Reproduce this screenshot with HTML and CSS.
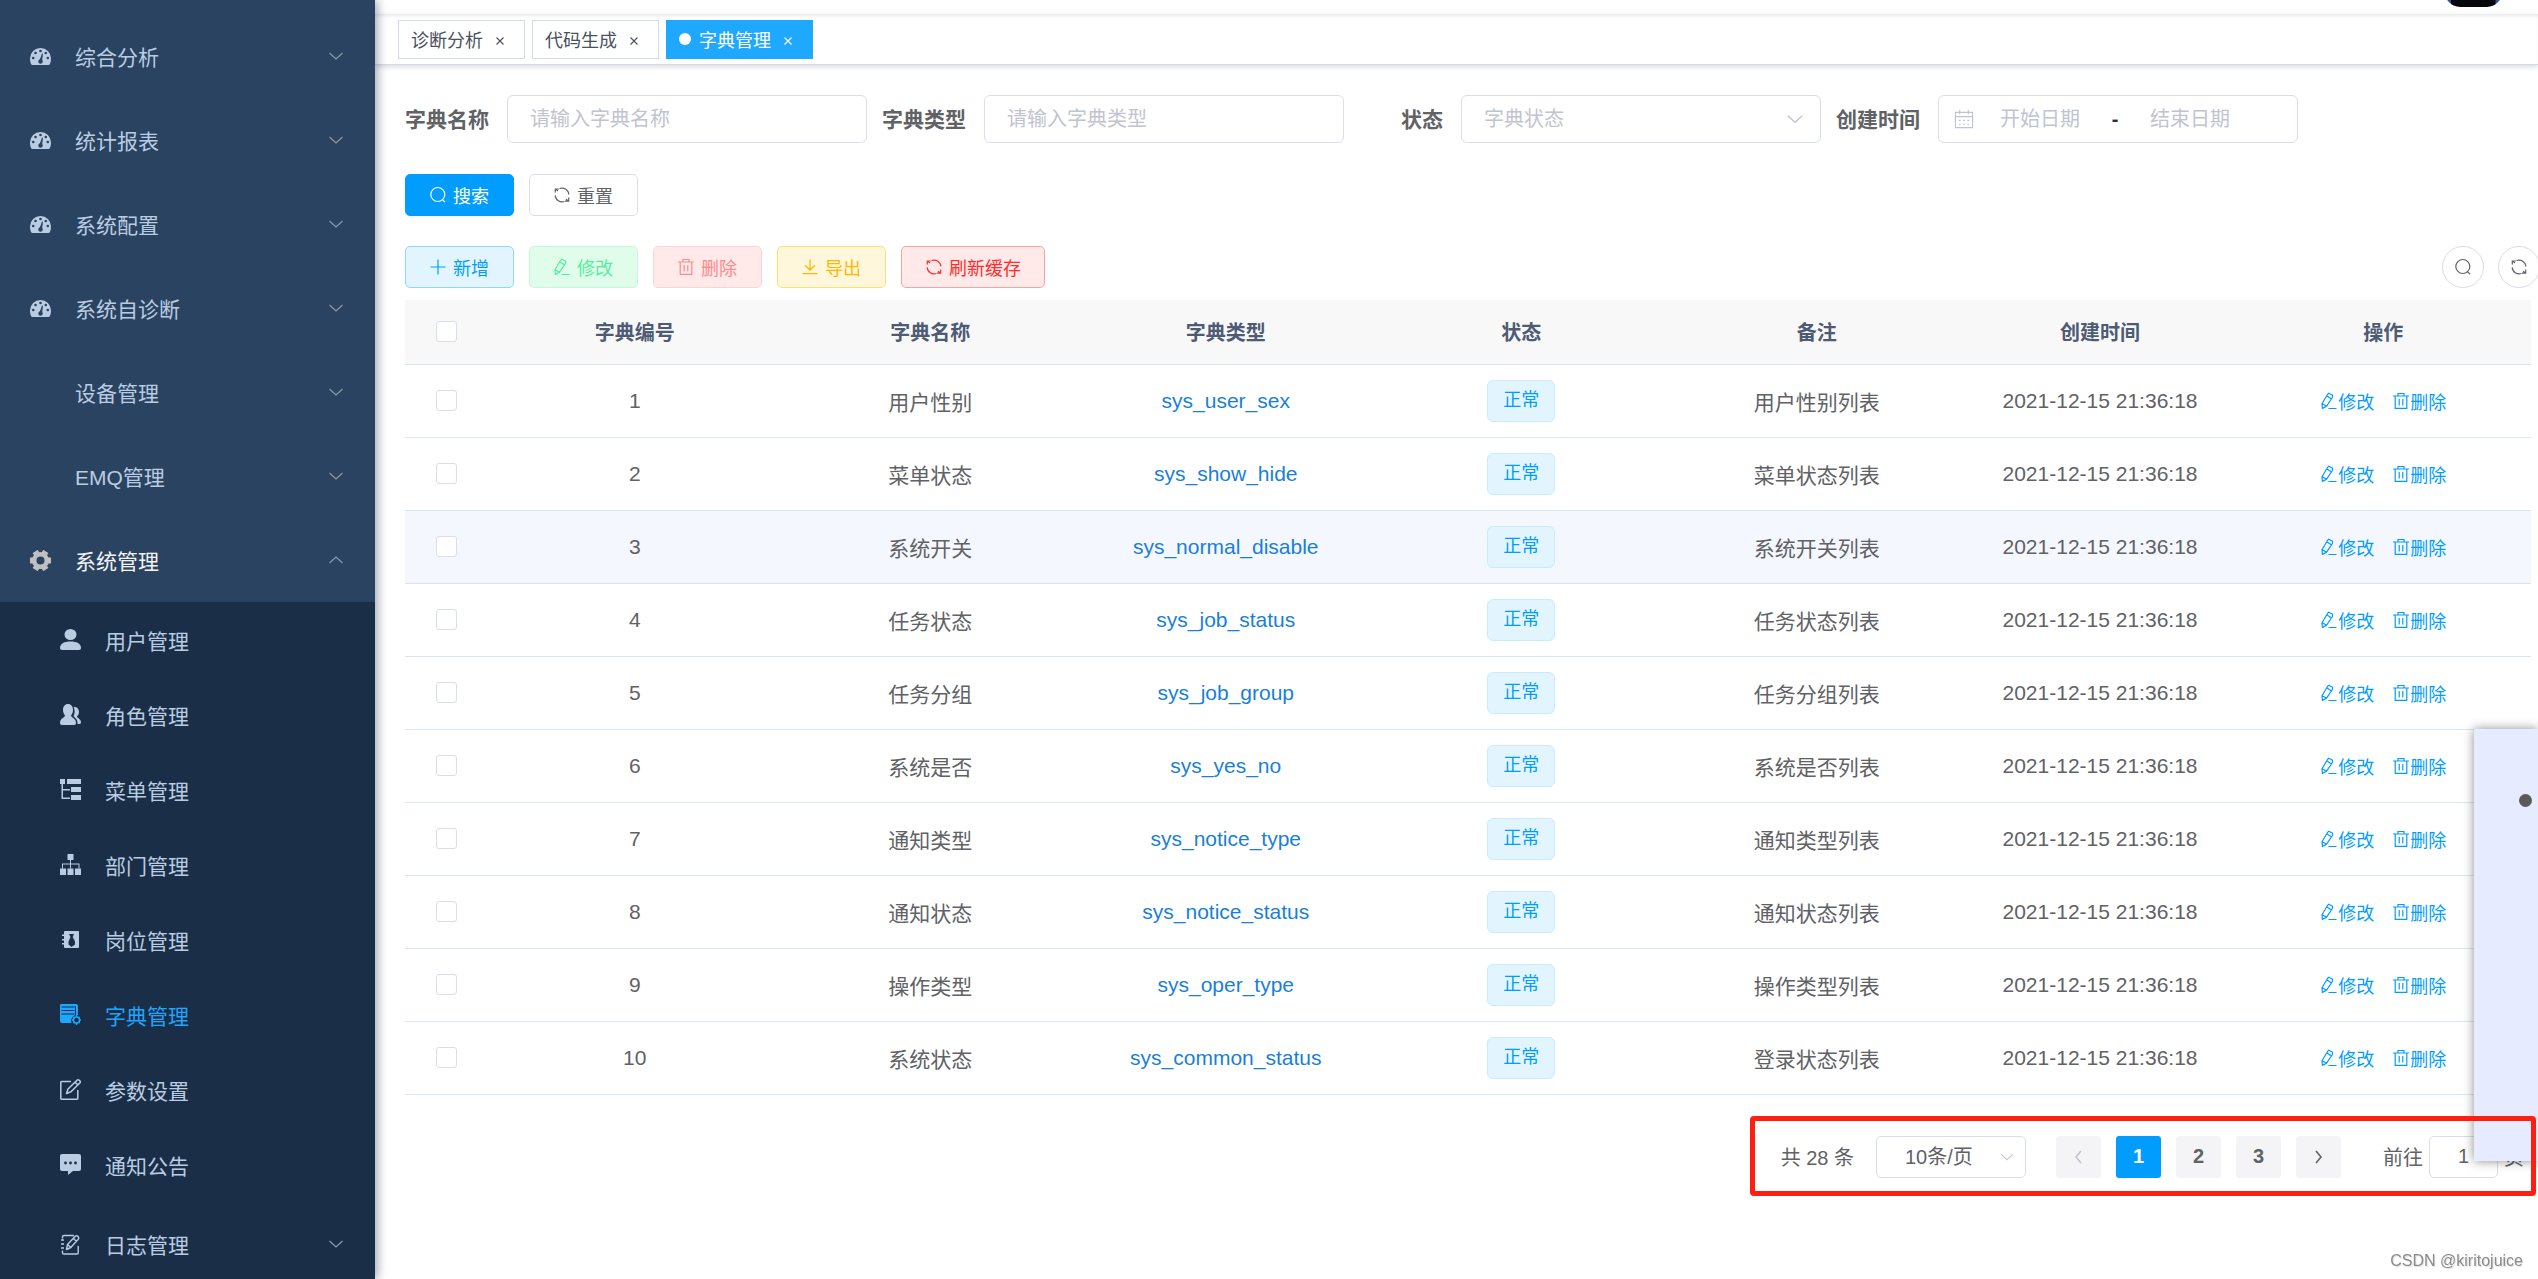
FILE: index.html
```html
<!DOCTYPE html>
<html lang="zh-CN">
<head>
<meta charset="utf-8">
<title>字典管理</title>
<link rel="stylesheet" href="styles.css">
</head>
<body>
<svg class="sprite" aria-hidden="true">
  <symbol id="i-dash" viewBox="0 0 21 21"><path fill="currentColor" d="M10.500 2A10.500 10.500 0 0 0 0 12.500C0 15 .5 16.800 1.200 18.200Q1.600 19 2.500 19H18.500Q19.400 19 19.800 18.200C20.500 16.800 21 15 21 12.500A10.500 10.500 0 0 0 10.500 2Z"/><g fill="var(--hole)"><circle cx="10.500" cy="5" r="1.300"/><circle cx="5.500" cy="7" r="1.300"/><circle cx="15.800" cy="7" r="1.300"/><circle cx="3.200" cy="12" r="1.300"/><circle cx="17.800" cy="12" r="1.300"/><circle cx="10.500" cy="15.500" r="2.200"/><path d="M9.500 14.500L12 7.500L13 7.800L12 15.500Z"/></g></symbol>
  <symbol id="i-gear" viewBox="0 0 21 21"><circle cx="10.500" cy="10.500" r="6.300" fill="none" stroke="currentColor" stroke-width="4.600"/><path stroke="currentColor" stroke-width="6" d="M0 10.500H4M17 10.500h4M5.200 1.400l2.400 4.100M13.400 15.500l2.400 4.100M15.800 1.400l-2.400 4.100M7.600 15.500l-2.400 4.100"/></symbol>
  <symbol id="i-user" viewBox="0 0 21 21"><g fill="currentColor"><ellipse cx="10.500" cy="5.500" rx="6" ry="5.500"/><path d="M0 19C0 14.500 4.500 12.500 10.500 12.500S21 14.500 21 19Q21 21 18 21H3Q0 21 0 19Z"/></g></symbol>
  <symbol id="i-peoples" viewBox="0 0 21 21"><g fill="currentColor"><path d="M8 0C11 0 13 2.500 13 6C13 8.500 12 10.500 11 11.500C11 13.500 16 14 16 19Q16 21 14 21H2Q0 21 0 19C0 14 5 13.500 5 11.500C4 10.500 3 8.500 3 6C3 2.500 5 0 8 0Z"/><path d="M13.500 3C16.500 2.500 19 4.500 19 8C19 10 18 11.500 17 12.200C17 14 21 15 21 18.500Q21 20 19 20H17.500C18 16 15.500 14 13.500 12.200C15 9.500 15 5.500 13.500 3Z"/></g></symbol>
  <symbol id="i-tree" viewBox="0 0 21 21"><g fill="currentColor"><path d="M0 0h5v5H0zM7 0h14v5H7zM11 8h10v5H11zM11 16h10v5H11z"/><path d="M1.500 5h1.500v5h7v1.500H3v7h7V20H1.500z"/></g></symbol>
  <symbol id="i-org" viewBox="0 0 21 21"><g fill="currentColor"><path d="M7.500 0h6v6h-6zM0 14.500h6V21H0zM7.500 14.500h6V21h-6zM15 14.500h6V21h-6z"/><path d="M10 6h1v3.500h8.500v5h-1v-4H11v4h-1v-4H3v4H2v-5h8z"/></g></symbol>
  <symbol id="i-post" viewBox="0 0 21 21"><path fill="currentColor" d="M5 2h13q1 0 1 1v15q0 1-1 1H5q-1 0-1-1v-2.500H2V14h2v-2.500H2V10h2V7H2V5.500h2V3q0-1 1-1z"/><path fill="var(--hole)" d="M9 5h5l-1.300 3L15 12.500v3L11.500 18 8.500 15.500v-3L10.500 8z"/></symbol>
  <symbol id="i-dict" viewBox="0 0 21 21"><path fill="currentColor" d="M1 0H16q2 0 2 2V11a6 6 0 0 0-6.500 8H2q-2 0-2-2V1q0-1 1-1z"/><path fill="none" stroke="var(--hole)" d="M1.500 3H14.500M1.500 6.500h13M1.500 10h13M15.500 2v9"/><circle cx="16.500" cy="16" r="3" fill="none" stroke="currentColor" stroke-width="1.500"/><path stroke="currentColor" stroke-width="1.500" d="M16.500 11v2M16.500 19v2M12 16h1.500M19.500 16H21M13.500 12.800l1 1.200M19.500 12.800l-1 1.200M13.500 19.200l1-1.200M19.500 19.200l-1-1.200"/></symbol>
  <symbol id="i-edit" viewBox="0 0 21 21"><path fill="none" stroke="currentColor" stroke-width="1.500" stroke-linejoin="round" d="M11 2.500H1.500Q.8 2.500.8 3.200V19.500Q.8 20.200 1.500 20.200H17Q17.800 20.200 17.800 19.500V11M6.500 14.500L8 10 17 1.200Q18 .5 19 1.200L20 2Q20.600 3 19.800 4L11 12.800ZM15 3l3 3"/></symbol>
  <symbol id="i-msg" viewBox="0 0 21 21"><path fill="currentColor" d="M2 0H19q2 0 2 2V15q0 2-2 2H13L8 21V17H2q-2 0-2-2V2q0-2 2-2z"/><g fill="var(--hole)"><circle cx="5.500" cy="9" r="1.400"/><circle cx="10.500" cy="9" r="1.400"/><circle cx="15.500" cy="9" r="1.400"/></g></symbol>
  <symbol id="i-log" viewBox="0 0 21 21"><path fill="none" stroke="currentColor" stroke-width="1.400" stroke-linejoin="round" d="M14 1.500H4Q2.500 1.500 2.500 3V4.500M1 6h3M1 10h3M1 14h3M2.500 16.500V19Q2.500 20 4 20H17Q18.200 20 18.200 19V12M6.500 15.500L7.500 10.500 15 2.500Q16.500 1 18 2.500T18 5.500L10.800 13.500ZM13.500 4.500l3 3M7.800 10.700l3 2.700"/></symbol>
  <symbol id="i-down" viewBox="0 0 18 18"><path fill="none" stroke="currentColor" stroke-width="1.200" d="M2.500 6L9 12L15.500 6"/></symbol>
  <symbol id="i-up" viewBox="0 0 18 18"><path fill="none" stroke="currentColor" stroke-width="1.200" d="M2.500 12L9 6L15.500 12"/></symbol>
  <symbol id="i-left" viewBox="0 0 18 18"><path fill="none" stroke="currentColor" stroke-width="1.600" d="M11 3L6 9L11 15"/></symbol>
  <symbol id="i-right" viewBox="0 0 18 18"><path fill="none" stroke="currentColor" stroke-width="1.600" d="M6 3L11 9L6 15"/></symbol>
  <symbol id="i-x" viewBox="0 0 10 10"><path fill="none" stroke="currentColor" stroke-width="1.100" d="M1.500 1.500L8.500 8.500M8.500 1.500L1.500 8.500"/></symbol>
  <symbol id="i-search" viewBox="0 0 18 18"><path fill="none" stroke="currentColor" stroke-width="1.200" d="M13.300 13.500L16 16.200"/><circle cx="8.800" cy="8.500" r="7" fill="none" stroke="currentColor" stroke-width="1.200"/></symbol>
  <symbol id="i-refresh" viewBox="0 0 18 18"><path fill="none" stroke="currentColor" stroke-width="1.200" d="M6.500 2.500C11 1 15.700 4 15.800 8.600M2.200 9.400C2.400 14 7 17 11.500 15.500M2.300 6.500V3H5.800M3 3.400L5 5M15.700 11.500V15.200H12M15 14.800L13 13.200"/></symbol>
  <symbol id="i-plus" viewBox="0 0 18 18"><path stroke="currentColor" stroke-width="1.200" d="M9 1.500V16.500M1.500 9H16.500"/></symbol>
  <symbol id="i-pen" viewBox="0 0 18 18"><path fill="none" stroke="currentColor" stroke-width="1.200" stroke-linejoin="round" d="M7.500 2.500L8.800 1.200L12.600 3.300L12.400 5.500L6.600 14.200L2.400 16.400L2 11.800ZM7 4L11.200 6.800M2.200 11.800L6.600 14.200M8.500 16.500H16.500"/></symbol>
  <symbol id="i-trash" viewBox="0 0 18 18"><path fill="none" stroke="currentColor" stroke-width="1.200" d="M1 4H17M3.200 4V16.400H14.800V4M6 4V1.500H12V4M7.200 7V13.500M10.800 7V13.500"/></symbol>
  <symbol id="i-download" viewBox="0 0 18 18"><path fill="none" stroke="currentColor" stroke-width="1.300" d="M9 1.500V12M4 7.200L9 12L14 7.200M1.500 15.700H16.500"/></symbol>
  <symbol id="i-cal" viewBox="0 0 21 21"><path fill="none" stroke="currentColor" stroke-width="1.200" d="M1.500 3.500H19.500V19.500H1.500ZM1.500 8H19.500M6 1V5.500M15 1V5.500M5 12h2M9.500 12h2M14 12h2M5 16h2M9.500 16h2M14 16h2"/></symbol>
</svg>

<div class="app">
  <nav class="sidebar">
    <ul class="menu">
      <li><a href="#" class="item"><svg class="ico"><use href="#i-dash"/></svg><span class="name">综合分析</span><svg class="arrow"><use href="#i-down"/></svg></a></li>
      <li><a href="#" class="item"><svg class="ico"><use href="#i-dash"/></svg><span class="name">统计报表</span><svg class="arrow"><use href="#i-down"/></svg></a></li>
      <li><a href="#" class="item"><svg class="ico"><use href="#i-dash"/></svg><span class="name">系统配置</span><svg class="arrow"><use href="#i-down"/></svg></a></li>
      <li><a href="#" class="item"><svg class="ico"><use href="#i-dash"/></svg><span class="name">系统自诊断</span><svg class="arrow"><use href="#i-down"/></svg></a></li>
      <li><a href="#" class="item"><span class="ico"></span><span class="name">设备管理</span><svg class="arrow"><use href="#i-down"/></svg></a></li>
      <li><a href="#" class="item"><span class="ico"></span><span class="name">EMQ管理</span><svg class="arrow"><use href="#i-down"/></svg></a></li>
      <li>
        <a href="#" class="item open"><svg class="ico"><use href="#i-gear"/></svg><span class="name">系统管理</span><svg class="arrow"><use href="#i-up"/></svg></a>
        <ul class="submenu">
          <li><a href="#" class="item"><svg class="ico"><use href="#i-user"/></svg><span class="name">用户管理</span></a></li>
          <li><a href="#" class="item"><svg class="ico"><use href="#i-peoples"/></svg><span class="name">角色管理</span></a></li>
          <li><a href="#" class="item"><svg class="ico"><use href="#i-tree"/></svg><span class="name">菜单管理</span></a></li>
          <li><a href="#" class="item"><svg class="ico"><use href="#i-org"/></svg><span class="name">部门管理</span></a></li>
          <li><a href="#" class="item"><svg class="ico"><use href="#i-post"/></svg><span class="name">岗位管理</span></a></li>
          <li><a href="#" class="item active"><svg class="ico"><use href="#i-dict"/></svg><span class="name">字典管理</span></a></li>
          <li><a href="#" class="item"><svg class="ico"><use href="#i-edit"/></svg><span class="name">参数设置</span></a></li>
          <li><a href="#" class="item"><svg class="ico"><use href="#i-msg"/></svg><span class="name">通知公告</span></a></li>
          <li><a href="#" class="item parent"><svg class="ico"><use href="#i-log"/></svg><span class="name">日志管理</span><svg class="arrow"><use href="#i-down"/></svg></a></li>
        </ul>
      </li>
    </ul>
  </nav>

  <div class="main">
    <header class="navbar"><div class="avatar"></div></header>
    <div class="tags">
      <a href="#" class="tag">诊断分析<svg class="close"><use href="#i-x"/></svg></a>
      <a href="#" class="tag">代码生成<svg class="close"><use href="#i-x"/></svg></a>
      <a href="#" class="tag current"><i class="dot"></i>字典管理<svg class="close"><use href="#i-x"/></svg></a>
    </div>

    <main class="content">
      <form class="filters">
        <div class="field"><label for="f-name">字典名称</label><input id="f-name" class="box" type="text" placeholder="请输入字典名称"></div>
        <div class="field"><label for="f-type">字典类型</label><input id="f-type" class="box" type="text" placeholder="请输入字典类型"></div>
        <div class="field"><label for="f-status">状态</label><span class="select"><select id="f-status" class="box empty"><option>字典状态</option><option>正常</option><option>停用</option></select><svg><use href="#i-down"/></svg></span></div>
        <div class="field"><label for="f-start">创建时间</label><span class="box range"><svg><use href="#i-cal"/></svg><input id="f-start" type="text" placeholder="开始日期"><b>-</b><input type="text" aria-label="结束日期" placeholder="结束日期"></span></div>
        <div class="actions">
          <button type="button" class="btn primary"><svg><use href="#i-search"/></svg>搜索</button>
          <button type="button" class="btn"><svg><use href="#i-refresh"/></svg>重置</button>
        </div>
      </form>

      <div class="toolbar">
        <button type="button" class="btn add"><svg><use href="#i-plus"/></svg>新增</button>
        <button type="button" class="btn modify"><svg><use href="#i-pen"/></svg>修改</button>
        <button type="button" class="btn remove"><svg><use href="#i-trash"/></svg>删除</button>
        <button type="button" class="btn export"><svg><use href="#i-download"/></svg>导出</button>
        <button type="button" class="btn danger"><svg><use href="#i-refresh"/></svg>刷新缓存</button>
        <div class="rounds">
          <button type="button" class="round" aria-label="搜索"><svg><use href="#i-search"/></svg></button>
          <button type="button" class="round" aria-label="刷新"><svg><use href="#i-refresh"/></svg></button>
        </div>
      </div>

      <table class="grid">
        <colgroup><col class="c-check"><col><col><col><col><col><col class="c-time"><col></colgroup>
        <thead>
          <tr><th><input type="checkbox" aria-label="全选"></th><th>字典编号</th><th>字典名称</th><th>字典类型</th><th>状态</th><th>备注</th><th>创建时间</th><th>操作</th></tr>
        </thead>
        <tbody>
          <tr><td><input type="checkbox" aria-label="1"></td><td>1</td><td>用户性别</td><td><a href="#">sys_user_sex</a></td><td><span class="state">正常</span></td><td>用户性别列表</td><td>2021-12-15 21:36:18</td><td><div class="ops"><button type="button"><svg><use href="#i-pen"/></svg>修改</button><button type="button"><svg><use href="#i-trash"/></svg>删除</button></div></td></tr>
          <tr><td><input type="checkbox" aria-label="2"></td><td>2</td><td>菜单状态</td><td><a href="#">sys_show_hide</a></td><td><span class="state">正常</span></td><td>菜单状态列表</td><td>2021-12-15 21:36:18</td><td><div class="ops"><button type="button"><svg><use href="#i-pen"/></svg>修改</button><button type="button"><svg><use href="#i-trash"/></svg>删除</button></div></td></tr>
          <tr class="hover"><td><input type="checkbox" aria-label="3"></td><td>3</td><td>系统开关</td><td><a href="#">sys_normal_disable</a></td><td><span class="state">正常</span></td><td>系统开关列表</td><td>2021-12-15 21:36:18</td><td><div class="ops"><button type="button"><svg><use href="#i-pen"/></svg>修改</button><button type="button"><svg><use href="#i-trash"/></svg>删除</button></div></td></tr>
          <tr><td><input type="checkbox" aria-label="4"></td><td>4</td><td>任务状态</td><td><a href="#">sys_job_status</a></td><td><span class="state">正常</span></td><td>任务状态列表</td><td>2021-12-15 21:36:18</td><td><div class="ops"><button type="button"><svg><use href="#i-pen"/></svg>修改</button><button type="button"><svg><use href="#i-trash"/></svg>删除</button></div></td></tr>
          <tr><td><input type="checkbox" aria-label="5"></td><td>5</td><td>任务分组</td><td><a href="#">sys_job_group</a></td><td><span class="state">正常</span></td><td>任务分组列表</td><td>2021-12-15 21:36:18</td><td><div class="ops"><button type="button"><svg><use href="#i-pen"/></svg>修改</button><button type="button"><svg><use href="#i-trash"/></svg>删除</button></div></td></tr>
          <tr><td><input type="checkbox" aria-label="6"></td><td>6</td><td>系统是否</td><td><a href="#">sys_yes_no</a></td><td><span class="state">正常</span></td><td>系统是否列表</td><td>2021-12-15 21:36:18</td><td><div class="ops"><button type="button"><svg><use href="#i-pen"/></svg>修改</button><button type="button"><svg><use href="#i-trash"/></svg>删除</button></div></td></tr>
          <tr><td><input type="checkbox" aria-label="7"></td><td>7</td><td>通知类型</td><td><a href="#">sys_notice_type</a></td><td><span class="state">正常</span></td><td>通知类型列表</td><td>2021-12-15 21:36:18</td><td><div class="ops"><button type="button"><svg><use href="#i-pen"/></svg>修改</button><button type="button"><svg><use href="#i-trash"/></svg>删除</button></div></td></tr>
          <tr><td><input type="checkbox" aria-label="8"></td><td>8</td><td>通知状态</td><td><a href="#">sys_notice_status</a></td><td><span class="state">正常</span></td><td>通知状态列表</td><td>2021-12-15 21:36:18</td><td><div class="ops"><button type="button"><svg><use href="#i-pen"/></svg>修改</button><button type="button"><svg><use href="#i-trash"/></svg>删除</button></div></td></tr>
          <tr><td><input type="checkbox" aria-label="9"></td><td>9</td><td>操作类型</td><td><a href="#">sys_oper_type</a></td><td><span class="state">正常</span></td><td>操作类型列表</td><td>2021-12-15 21:36:18</td><td><div class="ops"><button type="button"><svg><use href="#i-pen"/></svg>修改</button><button type="button"><svg><use href="#i-trash"/></svg>删除</button></div></td></tr>
          <tr><td><input type="checkbox" aria-label="10"></td><td>10</td><td>系统状态</td><td><a href="#">sys_common_status</a></td><td><span class="state">正常</span></td><td>登录状态列表</td><td>2021-12-15 21:36:18</td><td><div class="ops"><button type="button"><svg><use href="#i-pen"/></svg>修改</button><button type="button"><svg><use href="#i-trash"/></svg>删除</button></div></td></tr>
        </tbody>
      </table>

      <div class="pager">
        <span>共 28 条</span>
        <span class="select size"><select aria-label="每页条数"><option>10条/页</option><option>20条/页</option></select><svg><use href="#i-down"/></svg></span>
        <div class="pages">
          <button type="button" class="off" aria-label="上一页"><svg><use href="#i-left"/></svg></button>
          <button type="button" class="on">1</button>
          <button type="button">2</button>
          <button type="button">3</button>
          <button type="button" aria-label="下一页"><svg><use href="#i-right"/></svg></button>
        </div>
        <label class="jump">前往<input type="text" value="1">页</label>
      </div>
    </main>
  </div>
</div>

<aside class="float"><i></i></aside>
<div class="credit">CSDN @kiritojuice</div>
</body>
</html>
```
FILE: styles.css
```css
* { box-sizing: border-box; }
body {
  margin: 0;
  font-family: "Liberation Sans", "Noto Sans CJK SC", sans-serif;
  font-size: 20px;
  color: #606266;
  background: #fff;
}
button, input, select { font: inherit; color: inherit; }
ul { margin: 0; padding: 0; list-style: none; }
a { text-decoration: none; }
.sprite { display: none; }

.app { display: flex; height: 100vh; overflow: hidden; }

/* side menu */
.sidebar {
  --hole: #2a4361;
  flex: 0 0 375px;
  padding-top: 14px;
  overflow: hidden;
  background: #2a4361;
  box-shadow: 3px 0 9px rgba(0, 21, 60, .35);
  z-index: 1;
}
.item {
  display: flex;
  align-items: center;
  gap: 24px;
  height: 84px;
  padding: 0 30px;
  font-size: 21px;
  color: #b9cce2;
}
.item .ico { width: 21px; height: 21px; flex: none; }
.item .name { flex: 1; }
.item .arrow { width: 18px; height: 18px; color: #8e99a8; }
.item.open { color: #f4f4f5; }
.item.open .ico { color: #c0c0c0; }
.submenu { --hole: #1a2f47; background: #1a2f47; }
.submenu .item { height: 75px; padding-left: 60px; }
.submenu .item.parent { height: 84px; }
.submenu .item.active { color: #1fa4ff; }

/* top */
.main { flex: 1; min-width: 0; }
.navbar {
  display: flex;
  justify-content: flex-end;
  height: 14px;
  padding-right: 36px;
  overflow: hidden;
}
.avatar {
  width: 57px;
  height: 57px;
  margin-top: -50px;
  border-radius: 15px;
  background: linear-gradient(90deg, #34509a 6px, #06070b 6px, #06070b 50px, #34509a 51px);
}
.tags {
  display: flex;
  align-items: center;
  gap: 7px;
  height: 51px;
  padding: 0 23px;
  border-bottom: 1px solid #d3dbea;
  box-shadow: 0 2px 5px rgba(0, 0, 0, .14), inset 0 3px 4px -2px rgba(0, 0, 0, .12);
}
.tag {
  display: flex;
  align-items: center;
  height: 39px;
  padding: 0 12px;
  border: 1px solid #d3dbea;
  font-size: 18px;
  color: #495060;
}
.tag .close { width: 10px; height: 10px; margin: 3px 7px 0 12px; }
.tag .dot { width: 12px; height: 12px; margin-right: 8px; border-radius: 50%; background: #fff; }
.tag.current { color: #fff; background: #1fa8ff; border-color: #1fa8ff; }

/* filters */
.content { padding: 30px 7px 0 30px; }
.filters { display: flex; flex-wrap: wrap; gap: 31px 15px; }
.field { display: flex; align-items: center; }
.field label {
  width: 102px;
  padding: 0 18px 2px 0;
  text-align: right;
  font-size: 21px;
  font-weight: bold;
  white-space: nowrap;
}
.box {
  width: 360px;
  height: 48px;
  padding: 0 22px;
  border: 1px solid #dadeec;
  border-radius: 6px;
  background: #fff;
  outline: 0;
}
::placeholder { color: #bfc4d0; opacity: 1; }
.select { display: grid; align-items: center; }
.select select { grid-area: 1 / 1; appearance: none; }
.select svg {
  grid-area: 1 / 1;
  justify-self: end;
  width: 20px;
  height: 20px;
  margin-right: 16px;
  color: #bfc4d0;
  pointer-events: none;
}
.empty { color: #bfc4d0; }
.range { display: flex; align-items: center; padding: 0 0 0 15px; }
.range svg { width: 20px; height: 20px; color: #bfc4d0; }
.range input {
  width: 132px;
  padding: 0;
  border: 0;
  outline: 0;
  background: none;
  text-align: center;
}
.range b { width: 18px; text-align: center; color: #303133; }
.actions { display: flex; gap: 15px; flex-basis: 100%; }

.btn {
  display: flex;
  align-items: center;
  gap: 6px;
  min-width: 109px;
  height: 42px;
  padding: 0 23px 1px;
  border: 1px solid #dadeec;
  border-radius: 5px;
  background: #fff;
  font-size: 18px;
  white-space: nowrap;
}
.btn svg, .round svg { width: 18px; height: 18px; }
.primary { color: #fff; background: #009dff; border-color: #009dff; }
.add { color: #009dff; background: #e2f5ff; border-color: #8ed7ff; }
.modify { color: #50f09a; background: #e0fdec; border-color: #c2fadb; }
.remove { color: #ff8a8a; background: #ffe9e9; border-color: #ffd2d3; }
.export { color: #ffb700; background: #fff7dc; border-color: #ffe070; }
.danger { color: #ff2d2d; background: #ffe9e9; border-color: #ffa0a0; }
.toolbar { display: flex; gap: 15px; margin: 30px -9px 12px 0; }
.rounds { display: flex; gap: 14px; margin-left: auto; }
.round {
  display: flex;
  align-items: center;
  justify-content: center;
  width: 42px;
  height: 42px;
  padding: 0;
  border: 1px solid #dadeec;
  border-radius: 50%;
  background: #fff;
}

/* table */
.grid { width: 100%; table-layout: fixed; border-collapse: collapse; font-size: 21px; }
.c-check { width: 82px; }
.c-time { width: 271px; }
.grid th, .grid td {
  height: 73px;
  padding: 0;
  border-bottom: 1px solid #dbe5ee;
  text-align: center;
  vertical-align: middle;
}
.grid th { height: 64px; background: #f8f8f9; color: #4e5b75; font-size: 20px; }
.grid td a { color: #1a7fd9; }
.hover { background: #f4f7fd; }
.grid input {
  display: block;
  appearance: none;
  width: 21px;
  height: 21px;
  margin: 0 auto;
  border: 1px solid #dadeec;
  border-radius: 3px;
  background: #fff;
}
.state {
  display: inline-block;
  height: 42px;
  padding: 0 15px;
  border: 1px solid #c8ecff;
  border-radius: 6px;
  background: #e2f5ff;
  color: #009dff;
  font-size: 18px;
  line-height: 38px;
  vertical-align: middle;
}
.ops { display: flex; justify-content: center; gap: 18px; }
.ops button {
  display: flex;
  align-items: center;
  padding: 0;
  border: 0;
  background: none;
  font-size: 18px;
  color: #009dff;
}
.ops svg { width: 18px; height: 18px; }

/* pagination with its highlighted frame */
.pager {
  position: relative;
  display: flex;
  align-items: center;
  width: max-content;
  margin: 21px -5px 0 auto;
  padding: 20px 12px 18px 31px;
}
.pager::after {
  content: "";
  position: absolute;
  inset: 0;
  z-index: 3;
  border: 5px solid #ff1f10;
  border-radius: 4px;
  pointer-events: none;
}
.size { margin: 0 30px 0 22px; }
.size select {
  width: 150px;
  height: 42px;
  padding: 0 28px;
  border: 1px solid #dadeec;
  border-radius: 5px;
  background: #fff;
}
.size svg { width: 16px; height: 16px; margin-right: 11px; }
.pages { display: flex; gap: 15px; }
.pages button {
  display: flex;
  align-items: center;
  justify-content: center;
  width: 45px;
  height: 42px;
  padding: 0;
  border: 0;
  border-radius: 3px;
  background: #f4f4f6;
  font-weight: bold;
}
.pages svg { width: 18px; height: 18px; }
.pages .off { color: #bfc4d0; }
.pages .on { color: #fff; background: #009dff; }
.jump { display: flex; align-items: center; margin-left: 42px; }
.jump input {
  width: 69px;
  height: 42px;
  margin: 0 6px;
  padding: 0;
  border: 1px solid #dadeec;
  border-radius: 5px;
  text-align: center;
}

/* floating layers */
.float {
  position: fixed;
  right: 0;
  bottom: 118px;
  z-index: 2;
  width: 64px;
  height: 432px;
  background: #e6ebff;
  box-shadow: 0 0 10px rgba(0, 0, 0, .45);
}
.float i {
  position: absolute;
  top: 65px;
  right: 6px;
  width: 13px;
  height: 13px;
  border-radius: 50%;
  background: #5a5a5a;
}
.credit {
  position: fixed;
  right: 15px;
  bottom: 9px;
  font-size: 16px;
  color: #8c8c8c;
  text-shadow: 1px 1px 1px #ddd;
}
```
